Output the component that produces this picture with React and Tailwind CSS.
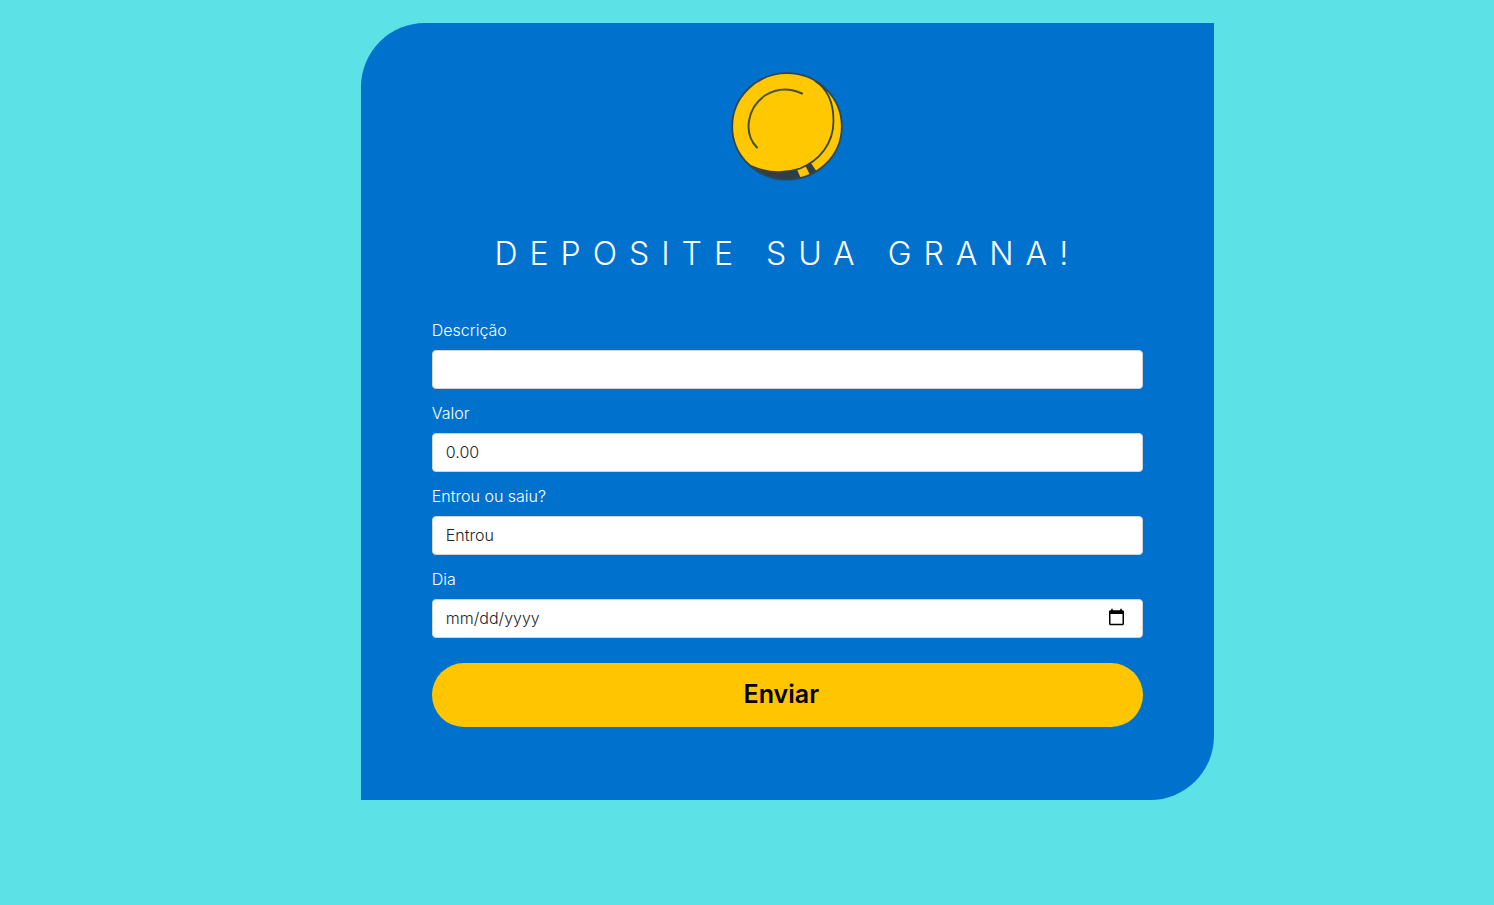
import React from "react";

const label = "mb-2 block leading-6 font-light text-white";
const control =
  "block h-[39px] w-full appearance-none rounded border border-[#ced4da] bg-white pr-3.5 pb-0.5 pl-[13px] text-base font-light text-[#212529] outline-none";
const dateParts =
  "[&::-webkit-calendar-picker-indicator]:h-[19px] [&::-webkit-calendar-picker-indicator]:w-[19px] [&::-webkit-datetime-edit-month-field]:p-0 [&::-webkit-datetime-edit-day-field]:p-0 [&::-webkit-datetime-edit-year-field]:p-0";

function Coin() {
  return (
    <svg viewBox="0 0 112 110" className="h-[110px] w-[112px]" aria-hidden="true">
      <clipPath id="coin-edge">
        <ellipse cx="56" cy="55.400" rx="54.800" ry="53.200" />
      </clipPath>
      <ellipse cx="56" cy="55.400" rx="54.800" ry="53.200" fill="#ffc800" />
      <g clipPath="url(#coin-edge)">
        <path d="M18 94C32 102 50 103 66 98.500L72 112H18Z" fill="#2f3e4b" />
        <path d="M74.500 95L80 92L88 104L80 106Z" fill="#2f3e4b" />
        <path d="M82 6C88 9 93 13 96 19L95 21C92 16 88 11 82 6Z" fill="#34443f" />
      </g>
      <path d="M84 10C97 18 102.500 33 102.500 50C102.500 73 88 90 69 97.500C53 103 35 101.500 20 95" fill="none" stroke="#34443f" strokeWidth="1.800" />
      <ellipse cx="56" cy="55.400" rx="54.800" ry="53.200" fill="none" stroke="#2f4654" strokeWidth="1.800" />
      <path d="M26 76.500C12 62 16 37 34 24.500C46 17 59 17 71 22.500" fill="none" stroke="#46503a" strokeWidth="2" strokeLinecap="round" />
    </svg>
  );
}

export default function App() {
  return (
    <main className="flex min-h-screen items-start bg-[#5ce1e6] font-['Inter',sans-serif] text-base">
      <section className="mt-[23px] mb-6 ml-[24.15%] w-[57.1%] rounded-tl-[64px] rounded-br-[64px] bg-[#0072ce] px-[71px] pt-12 pb-[73px]">
        <div className="flex justify-center">
          <Coin />
        </div>
        <h1 className="mt-[49px] text-center text-[32px] leading-12 font-light tracking-[12px] text-white">
          DEPOSITE SUA GRANA!
        </h1>
        <form className="mt-10" onSubmit={(e) => e.preventDefault()}>
          <div className="flex flex-col gap-3">
            <div>
              <label htmlFor="descricao" className={label}>Descrição</label>
              <input id="descricao" type="text" className={control} />
            </div>
            <div>
              <label htmlFor="valor" className={label}>Valor</label>
              <input id="valor" type="text" inputMode="decimal" defaultValue="0.00" className={control} />
            </div>
            <div>
              <label htmlFor="tipo" className={label}>Entrou ou saiu?</label>
              <select id="tipo" className={control}>
                <option>Entrou</option>
                <option>Saiu</option>
              </select>
            </div>
            <div>
              <label htmlFor="dia" className={label}>Dia</label>
              <input id="dia" type="date" className={`${control} ${dateParts}`} />
            </div>
          </div>
          <button type="submit" className="mt-[25px] h-16 w-full rounded-full bg-[#ffc600] pr-3 text-center text-[25px] font-semibold text-black">
            Enviar
          </button>
        </form>
      </section>
    </main>
  );
}
